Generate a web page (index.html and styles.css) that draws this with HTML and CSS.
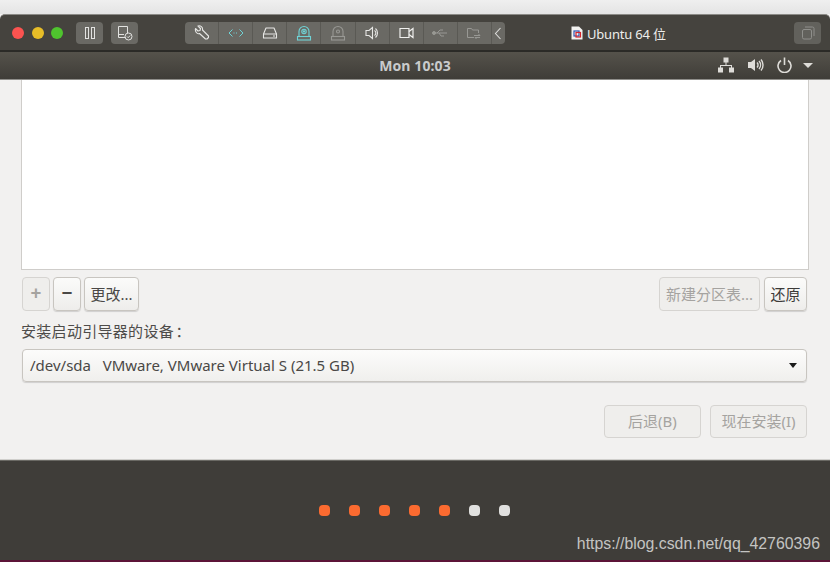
FILE: index.html
```html
<!DOCTYPE html>
<html lang="zh">
<head>
    <meta charset="UTF-8">
    <meta name="viewport" content="width=device-width, initial-scale=1.0">
    <title>Ubuntu 64 位</title>
    <link rel="stylesheet" href="styles.css">
</head>
<body>
    <div class="desk-top"></div>

    <!-- Barra de la ventana de VMware -->
    <header class="vm-bar">
        <div class="lights">
            <span class="light red"></span>
            <span class="light yellow"></span>
            <span class="light green"></span>
        </div>
        <button class="vm-btn pause-btn">
            <svg width="14" height="14" viewBox="0 0 14 14" fill="none" stroke="#e2e2e0" stroke-width="1"><rect x="2.5" y="1.5" width="3" height="11"/><rect x="8.5" y="1.5" width="3" height="11"/></svg>
        </button>
        <button class="vm-btn snap-btn">
            <svg width="16" height="16" viewBox="0 0 16 16" fill="none" stroke="#e2e2e0" stroke-width="1"><path d="M8.5 12.5H1.5V1.5H10.5V8"/><path d="M1.5 9.5H7"/><circle cx="11.5" cy="11.5" r="3.5"/><path d="M10 11.5l1.2 1.2 2-2.2"/></svg>
        </button>
        <div class="tool-group">
            <span class="tool">
                <svg width="16" height="16" viewBox="0 0 16 16" fill="none" stroke="#e6e6e4" stroke-width="1.1"><path d="M1.5 3.5L4 6l2-.5.5-2L4 1C6.5.2 9 2 8.5 5l6 6v1.500L13 14h-1.500l-6-5.500C3 9.500.8 6.500 1.500 3.500Z" stroke-linejoin="round"/></svg>
            </span>
            <span class="tool">
                <svg width="16" height="12" viewBox="0 0 16 12" fill="none" stroke="#6fd3d6" stroke-width="1"><path d="M4.5 2.5L1 6l3.5 3.5M11.5 2.5L15 6l-3.5 3.5"/><path d="M5.5 6h5" stroke-dasharray="1 1.5"/></svg>
            </span>
            <span class="tool">
                <svg width="16" height="14" viewBox="0 0 16 14" fill="none" stroke="#e6e6e4" stroke-width="1.1"><path d="M1.5 8L4 2h8l2.5 6v4h-13Z" stroke-linejoin="round"/><path d="M1.5 8h13M11 10h2"/></svg>
            </span>
            <span class="tool">
                <svg width="16" height="16" viewBox="0 0 16 16" fill="none" stroke="#6fd3d6" stroke-width="1.1"><path d="M3 11.5V6.500a5 5 0 0 1 10 0v5"/><circle cx="8" cy="6.500" r="2.200"/><circle cx="8" cy="6.500" r=".6"/><rect x="1.500" y="11.500" width="13" height="3.500"/></svg>
            </span>
            <span class="tool">
                <svg width="16" height="16" viewBox="0 0 16 16" fill="none" stroke="#989894" stroke-width="1.1"><path d="M3 11.5V6.500a5 5 0 0 1 10 0v5"/><circle cx="8" cy="6.500" r="1.500"/><rect x="1.500" y="11.500" width="13" height="3.500"/></svg>
            </span>
            <span class="tool">
                <svg width="14" height="14" viewBox="0 0 14 14" fill="none" stroke="#e6e6e4" stroke-width="1.1"><path d="M1 4.500h3L7.500 1.500v11L4 9.500H1Z"/><path d="M9.500 4.500a3 3 0 0 1 0 5M10.500 2.500a6 6 0 0 1 0 9"/></svg>
            </span>
            <span class="tool">
                <svg width="15" height="12" viewBox="0 0 15 12" fill="none" stroke="#f0f0ee" stroke-width="1.2"><path d="M1 1.500h9v9H1Z"/><path d="M10 4.500L14 1.500v9L10 7.500"/></svg>
            </span>
            <span class="tool">
                <svg width="16" height="10" viewBox="0 0 16 10" fill="none" stroke="#989894" stroke-width="1"><path d="M2 5h13M5 5l3-3h3M7 5l2 3h3"/><circle cx="2" cy="5" r="1.500" fill="#989894"/></svg>
            </span>
            <span class="tool">
                <svg width="16" height="15" viewBox="0 0 16 15" fill="none" stroke="#989894" stroke-width="1"><path d="M8 11.500H1.500V2.500h4l1 1.500h6v3"/><path d="M8 9.500h6l-1.500-1.500M14 11.500H9l1.500 1.500"/></svg>
            </span>
            <span class="tool tool-last">
                <svg width="8" height="13" viewBox="0 0 8 13" fill="none" stroke="#dcdcda" stroke-width="1.1"><path d="M6.500 1L1.500 6.500l5 5.500"/></svg>
            </span>
        </div>
        <div class="vm-title">
            <svg class="doc-icon" width="12" height="14" viewBox="0 0 12 14"><path d="M.5.500H8L11.500 4v9.500H.5Z" fill="#f2f2f0"/><rect x="3" y="5" width="5" height="5" fill="none" stroke="#2f55b5" stroke-width="1.2"/><rect x="5" y="6.500" width="4.500" height="4.500" fill="none" stroke="#d4262c" stroke-width="1.2"/></svg>
            <span>Ubuntu 64 位</span>
        </div>
        <button class="vm-btn copy-btn">
            <svg width="14" height="14" viewBox="0 0 14 14" fill="none" stroke="#8f8f8b" stroke-width="1"><rect x="1.500" y="3.500" width="9" height="9.500" rx="1.500"/><path d="M4 1h7.500A1.500 1.500 0 0 1 13 2.500V10"/></svg>
        </button>
    </header>

    <!-- Barra superior de Ubuntu -->
    <div class="ubuntu-bar">
        <span class="clock">Mon 10:03</span>
        <div class="tray">
            <svg width="16" height="16" viewBox="0 0 16 16" fill="#dedcd8"><rect x="5.500" y=".5" width="5" height="5"/><rect y="10.500" width="5" height="5"/><rect x="11" y="10.500" width="5" height="5"/><path d="M7.500 5h1v3H14v3h-1V9H3v2H2V8h5.500Z"/></svg>
            <svg width="16" height="14" viewBox="0 0 16 14" fill="none" stroke="#dedcd8" stroke-width="1.4"><path d="M0 4h3L7 1v12L3 10H0Z" fill="#dedcd8" stroke="none"/><path d="M9 4.500a3.500 3.500 0 0 1 0 5M11 3a6 6 0 0 1 0 8M13 1.500a8.500 8.500 0 0 1 0 11"/></svg>
            <svg width="15" height="16" viewBox="0 0 15 16" fill="none" stroke="#dedcd8" stroke-width="1.6"><path d="M4 3.500a6.500 6.500 0 1 0 7 0"/><path d="M7.500.5V8"/></svg>
            <span class="tray-arrow"></span>
        </div>
    </div>

    <!-- Contenido del instalador -->
    <main class="installer">
        <div class="part-list"></div>

        <div class="part-actions">
            <button class="btn icon-btn" disabled>+</button>
            <button class="btn icon-btn minus-btn">−</button>
            <button class="btn change-btn">更改...</button>
            <div class="spacer"></div>
            <button class="btn new-table-btn" disabled>新建分区表...</button>
            <button class="btn revert-btn">还原</button>
        </div>

        <label class="boot-label">安装启动引导器的设备<span class="colon">：</span></label>

        <div class="combo">
            <span>/dev/sda&nbsp;&nbsp;&nbsp;VMware, VMware Virtual S (21.5 GB)</span>
            <span class="combo-arrow"></span>
        </div>

        <div class="nav-actions">
            <button class="btn nav-btn" disabled>后退(B)</button>
            <button class="btn nav-btn" disabled>现在安装(I)</button>
        </div>
    </main>

    <!-- Pie con los puntos de progreso -->
    <footer class="progress">
        <span class="dot on"></span>
        <span class="dot on"></span>
        <span class="dot on"></span>
        <span class="dot on"></span>
        <span class="dot on"></span>
        <span class="dot"></span>
        <span class="dot"></span>
        <span class="watermark">https://blog.csdn.net/qq_42760396</span>
    </footer>
    <div class="desk-bottom"></div>
</body>
</html>
```

FILE: styles.css
```css
html, body {
    margin: 0;
    padding: 0;
}

body {
    width: 830px;
    height: 562px;
    overflow: hidden;
    background-color: #f2f1f0;
    font-family: "Noto Sans", "Noto Sans CJK SC", sans-serif;
}

button {
    font-family: inherit;
    margin: 0;
    padding: 0;
}

.desk-top {
    height: 14px;
    background: linear-gradient(#efefef, #e4e4e4);
}

.desk-bottom {
    height: 2px;
    background-color: #5c1438;
}

/* Barra de VMware */
.vm-bar {
    position: relative;
    display: flex;
    align-items: center;
    box-sizing: border-box;
    height: 38px;
    padding: 1px 9px 0 12px;
    background: #45433e;
    border-top: 1px solid #8b8a86;
    border-bottom: 2px solid #2b2a27;
    border-radius: 5px 5px 0 0;
}

.lights {
    display: flex;
    gap: 7.5px;
    margin-right: 13px;
}

.light {
    width: 12px;
    height: 12px;
    border-radius: 50%;
}

.red { background-color: #fc5350; }
.yellow { background-color: #e7bd27; }
.green { background-color: #4fc42e; }

.vm-btn {
    display: flex;
    align-items: center;
    justify-content: center;
    width: 27px;
    height: 22px;
    border: none;
    border-radius: 4px;
    background-color: #6a6964;
}

.snap-btn {
    margin-left: 8px;
}

.tool-group {
    display: flex;
    height: 22px;
    margin-left: 47px;
    border-radius: 4px;
    overflow: hidden;
    background-color: #6a6964;
}

.tool {
    display: flex;
    align-items: center;
    justify-content: center;
    box-sizing: border-box;
    width: 34.12px;
    border-right: 1px solid #5a5954;
}

.tool-last {
    width: 13px;
    border-right: none;
}

.vm-title {
    display: flex;
    align-items: center;
    gap: 4px;
    margin-left: 66px;
    font-size: 13px;
    letter-spacing: -0.2px;
    color: #eeeeec;
}

.doc-icon {
    flex: none;
}

.copy-btn {
    margin-left: auto;
    background-color: #62615c;
}

/* Barra de Ubuntu */
.ubuntu-bar {
    position: relative;
    display: flex;
    align-items: center;
    justify-content: center;
    box-sizing: border-box;
    height: 28px;
    background: linear-gradient(#55524b, #3f3d38);
    border-bottom: 1px solid #8f8e8a;
}

.clock {
    font-size: 14px;
    font-weight: 700;
    letter-spacing: 0.1px;
    color: #c9cbcc;
}

.tray {
    position: absolute;
    top: 5px;
    right: 17px;
    display: flex;
    align-items: center;
    gap: 13.5px;
}

.tray-arrow {
    width: 0;
    height: 0;
    margin-left: -2.5px;
    border-left: 5px solid transparent;
    border-right: 5px solid transparent;
    border-top: 5px solid #dedcd8;
}

/* Instalador */
.installer {
    box-sizing: border-box;
    height: 380px;
    padding: 0 23px 0 21px;
    border-bottom: 1px solid #d0cfcc;
    background-color: #f2f1f0;
}

.part-list {
    box-sizing: border-box;
    height: 190px;
    margin-right: -2px;
    background-color: #ffffff;
    border: 1px solid #cfcdca;
    border-top: none;
}

.part-actions {
    display: flex;
    height: 34px;
    margin-top: 7px;
    padding-left: 1px;
}

.btn {
    box-sizing: border-box;
    height: 34px;
    padding-bottom: 2px;
    border: 1px solid #c8c5c0;
    border-radius: 4px;
    background: linear-gradient(#fbfbfa, #eeedeb);
    box-shadow: 0 1px 1px rgba(0, 0, 0, 0.14);
    font-size: 15px;
    color: #4a4846;
}

.btn:disabled {
    background: #efeeec;
    border-color: #d6d4d1;
    box-shadow: none;
    color: #a5a3a0;
}

.icon-btn {
    width: 28px;
    font-size: 19px;
    font-weight: 700;
    line-height: 1;
}

.minus-btn {
    margin-left: 3px;
}

.change-btn {
    width: 55px;
    margin-left: 3px;
}

.spacer {
    flex: 1;
}

.new-table-btn {
    width: 101px;
}

.revert-btn {
    width: 43px;
    margin-left: 4px;
    color: #3c3a38;
}

.boot-label {
    display: block;
    height: 20px;
    margin-top: 10px;
    font-size: 15px;
    line-height: 20px;
    letter-spacing: 0.3px;
    color: #4e4c4a;
}

.colon {
    margin-left: 1.5px;
    font-family: "Noto Sans CJK TC", sans-serif;
}

.combo {
    display: flex;
    align-items: center;
    justify-content: space-between;
    box-sizing: border-box;
    height: 33px;
    margin: 8px 0 0 1px;
    padding: 0 9px 2px 7px;
    border: 1px solid #c8c5c0;
    border-radius: 4px;
    background: linear-gradient(#fcfcfb, #f0efed);
    box-shadow: 0 1px 1px rgba(0, 0, 0, 0.14);
    font-size: 15px;
    color: #4a4846;
}

.combo-arrow {
    width: 0;
    height: 0;
    margin-top: 2px;
    border-left: 4.5px solid transparent;
    border-right: 4.5px solid transparent;
    border-top: 5px solid #1a1a1a;
}

.nav-actions {
    display: flex;
    justify-content: flex-end;
    gap: 9px;
    margin-top: 23px;
}

.nav-btn {
    width: 97px;
    height: 33px;
}

/* Pie */
.progress {
    position: relative;
    display: flex;
    gap: 19px;
    box-sizing: border-box;
    height: 100px;
    padding: 44px 0 0 319px;
    background-color: #3f3d39;
    border-top: 1px solid #6a6964;
}

.dot {
    width: 11px;
    height: 11px;
    border-radius: 4px;
    background-color: #e0e0de;
}

.dot.on {
    background-color: #fb6b30;
}

.watermark {
    position: absolute;
    right: 10px;
    bottom: 7px;
    font-family: "Liberation Sans", Arial, sans-serif;
    font-size: 15.85px;
    color: #c4c4c2;
}
```
